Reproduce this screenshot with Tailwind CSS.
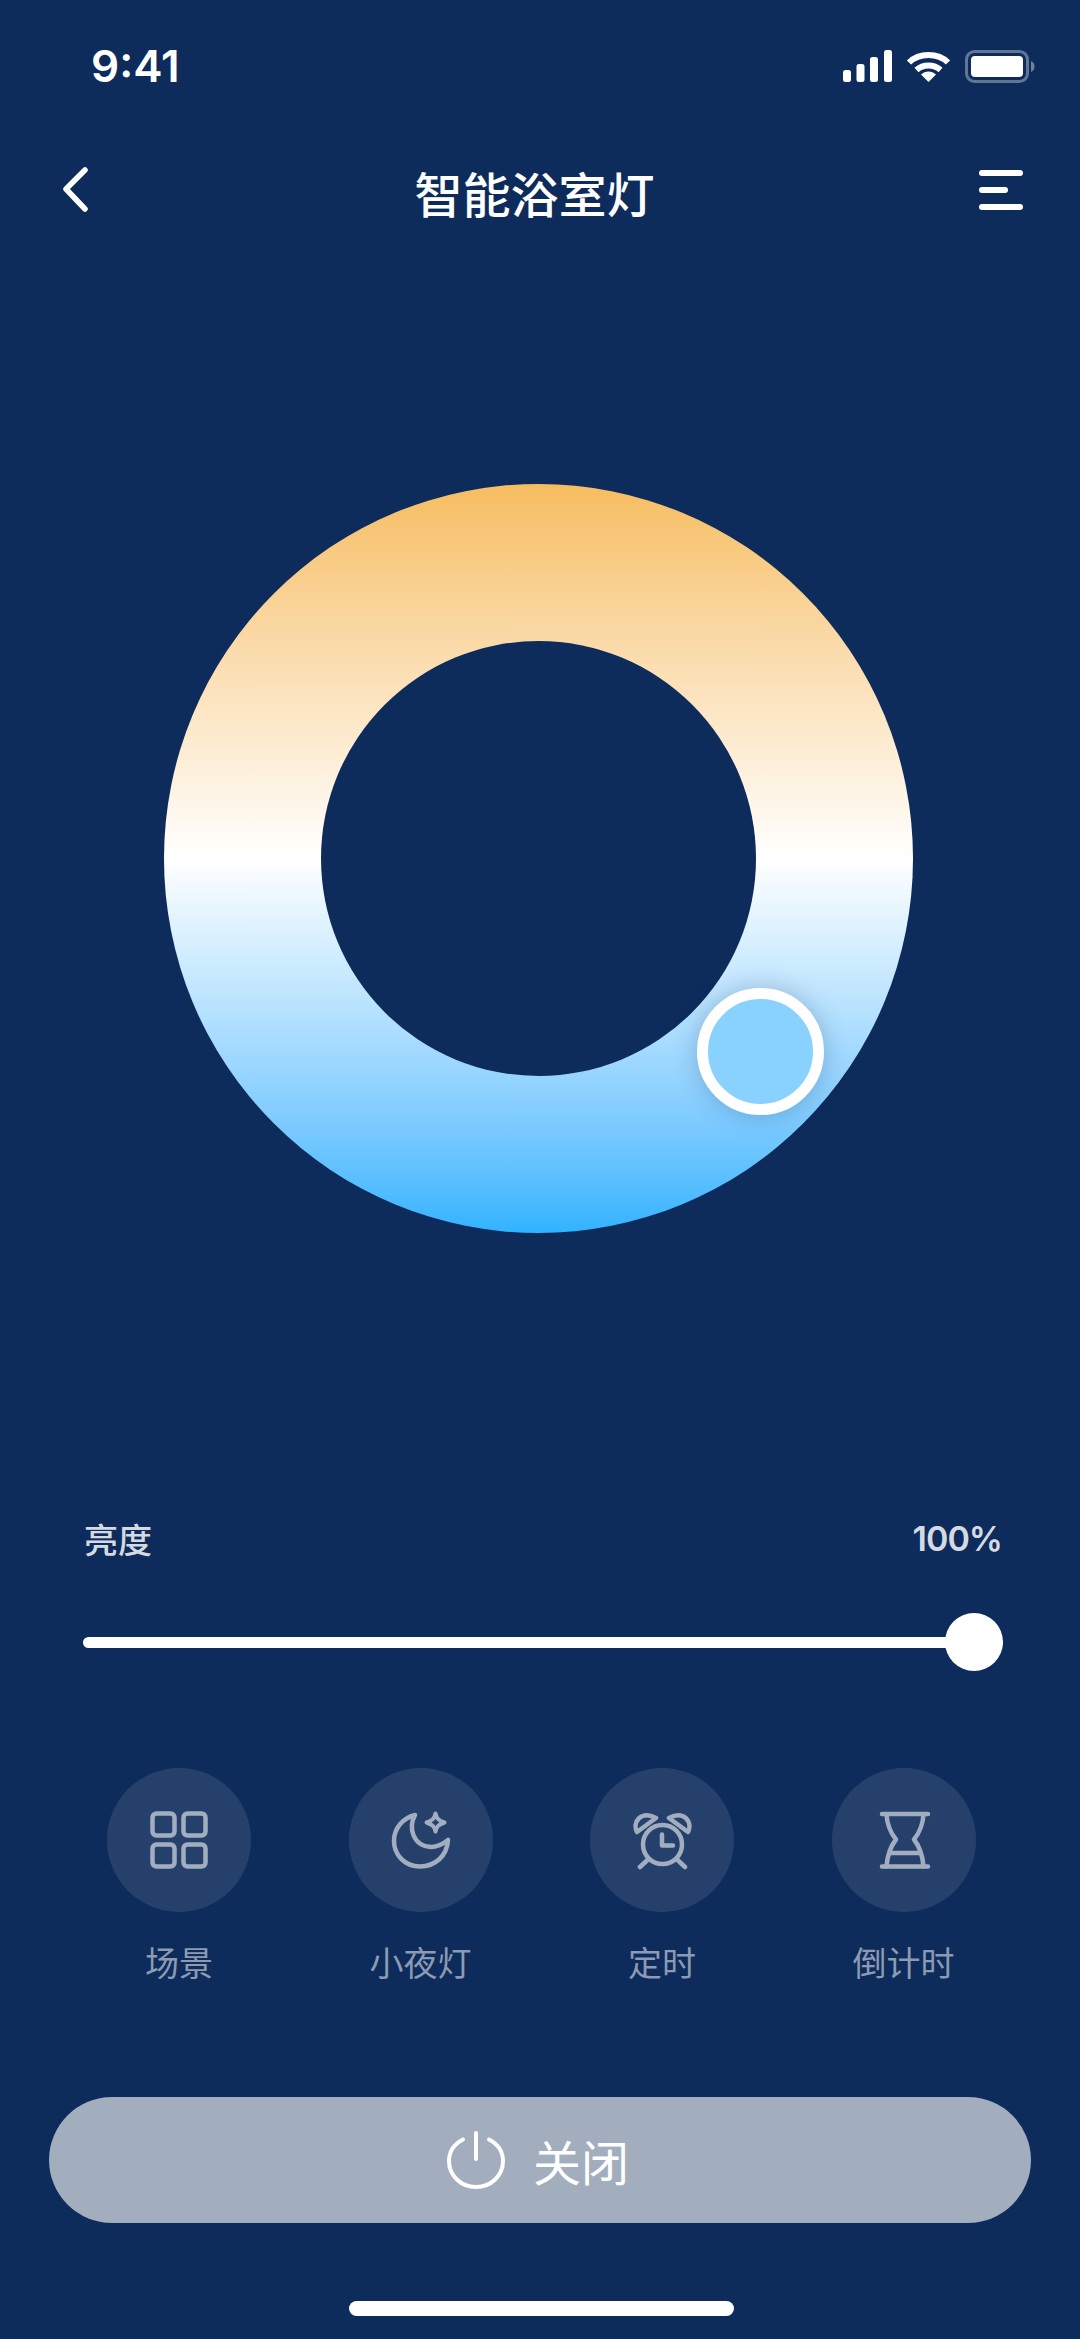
<!DOCTYPE html>
<html lang="zh-CN">
<head>
    <meta charset="UTF-8">
    <meta name="viewport" content="width=device-width, initial-scale=1.0">
    <title>智能浴室灯</title>
    <script src="https://cdn.jsdelivr.net/npm/@tailwindcss/browser@4"></script>
</head>
<body class="bg-[#0d2c5b]">
    <div class="w-[1080px] h-[2339px] flex flex-col bg-[#0d2c5b] text-white overflow-hidden font-['Noto_Sans_CJK_SC','Noto_Sans',sans-serif]">

        <!-- status bar -->
        <div class="h-[132px] pt-[44px] pl-[91px] pr-[45px] flex justify-between items-start">
            <span class="font-['Inter',sans-serif] font-semibold text-[44px] leading-[44px]">9:41</span>
            <div class="flex items-start gap-[13px] pt-[6px]">
                <svg width="50" height="32" viewBox="0 0 50 32" fill="#fff">
                    <rect x="0" y="20" width="8" height="12" rx="2.5"/>
                    <rect x="13.5" y="14" width="8" height="18" rx="2.5"/>
                    <rect x="27" y="7" width="8" height="25" rx="2.5"/>
                    <rect x="41" y="0" width="8" height="32" rx="2.5"/>
                </svg>
                <svg width="45" height="32" viewBox="0 0 45 32" fill="none" stroke="#fff" stroke-width="6">
                    <path d="M3 12.500C13 2.500 32 2.500 42 12.500"/>
                    <path d="M10.500 20C17 14 28 14 34.500 20"/>
                    <path d="M22.500 32L15 24.500C19.500 20.500 25.500 20.500 30 24.500Z" fill="#fff" stroke="none"/>
                </svg>
                <svg width="70" height="33" viewBox="0 0 70 33" fill="none" class="ml-[1px]">
                    <rect x="1.500" y="1.500" width="61" height="30" rx="8" stroke="#fff" stroke-opacity="0.35" stroke-width="3"/>
                    <rect x="6" y="6" width="52" height="21" rx="4" fill="#fff"/>
                    <path d="M66 11C68.500 12 69.500 14 69.500 16.500C69.500 19 68.500 21 66 22Z" fill="#fff" fill-opacity="0.4"/>
                </svg>
            </div>
        </div>

        <!-- nav -->
        <div class="h-[125px] relative flex items-center justify-center pr-[11px] pb-[6px]">
            <svg class="absolute left-[60px] top-[34px]" width="30" height="46" viewBox="0 0 30 46" fill="none" stroke="#fff" stroke-width="5.500" stroke-linecap="round" stroke-linejoin="round">
                <path d="M25 4L6 23L25 43"/>
            </svg>
            <span class="text-[48px] leading-[64px] font-medium">智能浴室灯</span>
            <div class="absolute left-[979px] top-[38px] flex flex-col gap-[11px]">
                <div class="w-[44px] h-[6px] rounded-full bg-white"></div>
                <div class="w-[29px] h-[6px] rounded-full bg-white"></div>
                <div class="w-[44px] h-[6px] rounded-full bg-white"></div>
            </div>
        </div>

        <!-- colour temperature ring -->
        <div class="mt-[227px] pl-[164px]">
            <div class="relative w-[749px] h-[749px] rounded-full bg-linear-to-b from-[#f6bd5f] via-white to-[#2fb3ff] flex items-center justify-center">
                <div class="w-[435px] h-[435px] rounded-full bg-[#0d2c5b]"></div>
                <div class="absolute left-[533px] top-[504px] w-[127px] h-[127px] rounded-full bg-[#89d2ff] border-[11px] border-white shadow-[0_0_24px_rgba(13,44,91,0.25)]"></div>
            </div>
        </div>

        <!-- brightness -->
        <div class="mt-[283px] pl-[84px] pr-[78px] flex justify-between items-start text-[#d5dae2] text-[34px] leading-[46px]">
            <span class="font-medium">亮度</span>
            <span class="font-['Inter',sans-serif] font-semibold tracking-[-1px]">100%</span>
        </div>
        <div class="mt-[51px] ml-[83px] w-[920px] h-[58px] relative flex items-center">
            <div class="w-full h-[11px] rounded-full bg-white"></div>
            <div class="absolute right-0 top-0 w-[58px] h-[58px] rounded-full bg-white"></div>
        </div>

        <!-- shortcuts -->
        <div class="mt-[97px] pl-[107px] flex gap-[97.500px] text-[#8c9ab2] text-[34px] leading-[46px]">
            <div class="w-[144px] flex flex-col items-center">
                <div class="w-[144px] h-[144px] rounded-full bg-white/10 flex items-center justify-center">
                    <svg width="60" height="60" viewBox="0 0 60 60" fill="none" stroke="#a2aec0" stroke-width="4.500">
                        <rect x="3.500" y="3.500" width="22" height="22" rx="4"/>
                        <rect x="34.500" y="3.500" width="22" height="22" rx="4"/>
                        <rect x="3.500" y="34.500" width="22" height="22" rx="4"/>
                        <rect x="34.500" y="34.500" width="22" height="22" rx="4"/>
                    </svg>
                </div>
                <span class="mt-[27px] whitespace-nowrap">场景</span>
            </div>
            <div class="w-[144px] flex flex-col items-center">
                <div class="w-[144px] h-[144px] rounded-full bg-white/10 flex items-center justify-center">
                    <svg width="60" height="60" viewBox="0 0 60 60" fill="none" stroke="#a2aec0" stroke-width="4.500" stroke-linejoin="round" stroke-linecap="round">
                        <path d="M24 5C17 18 22 36 40 37C47 37 52 34 57 30C56 46 44 56.500 29 56.500C13 56.500 3 44 3 31C3 18 12 8 24 5Z"/>
                        <path d="M44.500 3.500C45.500 8.500 47.500 10.500 53.500 12.500C47.500 14.500 45.500 16.500 44.500 21.500C43.500 16.500 41.500 14.500 35.500 12.500C41.500 10.500 43.500 8.500 44.500 3.500Z" stroke-width="4"/>
                    </svg>
                </div>
                <span class="mt-[27px] whitespace-nowrap">小夜灯</span>
            </div>
            <div class="w-[144px] flex flex-col items-center">
                <div class="w-[144px] h-[144px] rounded-full bg-white/10 flex items-center justify-center">
                    <svg width="60" height="60" viewBox="0 0 60 60" fill="none" stroke="#a2aec0" stroke-width="4.500" stroke-linecap="round" stroke-linejoin="round">
                        <circle cx="30.500" cy="34.500" r="19.500"/>
                        <path d="M30 24.500V35.500H41"/>
                        <path d="M16 49.500L8 57"/>
                        <path d="M45 49.500L53 57"/>
                        <path d="M5 22C0 12 9 0 24 8Z"/>
                        <path d="M56 22C61 12 52 0 37 8Z"/>
                    </svg>
                </div>
                <span class="mt-[27px] whitespace-nowrap">定时</span>
            </div>
            <div class="w-[144px] flex flex-col items-center">
                <div class="w-[144px] h-[144px] rounded-full bg-white/10 flex items-center justify-center">
                    <svg width="60" height="60" viewBox="0 0 60 60" fill="none" stroke="#a2aec0" stroke-width="4.500" stroke-linecap="round" stroke-linejoin="round">
                        <path d="M8 4H54"/>
                        <path d="M8 56.500H54"/>
                        <path d="M12.500 4C13 15 16 22 22 29.500C16 37 13.500 44 12.500 56.500"/>
                        <path d="M49.500 4C49 15 46 22 40 29.500C46 37 48.500 44 49.500 56.500"/>
                        <path d="M16 43H46"/>
                    </svg>
                </div>
                <span class="mt-[27px] whitespace-nowrap">倒计时</span>
            </div>
        </div>

        <!-- power button -->
        <div class="mt-[112px] ml-[49px] w-[982px] h-[126px] rounded-full bg-[#a2aebd] flex items-center justify-center gap-[28px] pr-[4px]">
            <svg width="58" height="58" viewBox="0 0 58 58" fill="none" stroke="#fff" stroke-width="4" stroke-linecap="round">
                <path d="M16 8.500C7.500 13 2 20.500 2 30C2 44.500 14 56 29 56C44 56 56 44.500 56 30C56 20.500 50.500 13 42 8.500"/>
                <path d="M29 2V28"/>
            </svg>
            <span class="text-[48px] leading-[64px]">关闭</span>
        </div>

        <!-- home indicator -->
        <div class="mt-[78px] ml-[349px] w-[385px] h-[15px] rounded-full bg-white"></div>
    </div>
</body>
</html>
